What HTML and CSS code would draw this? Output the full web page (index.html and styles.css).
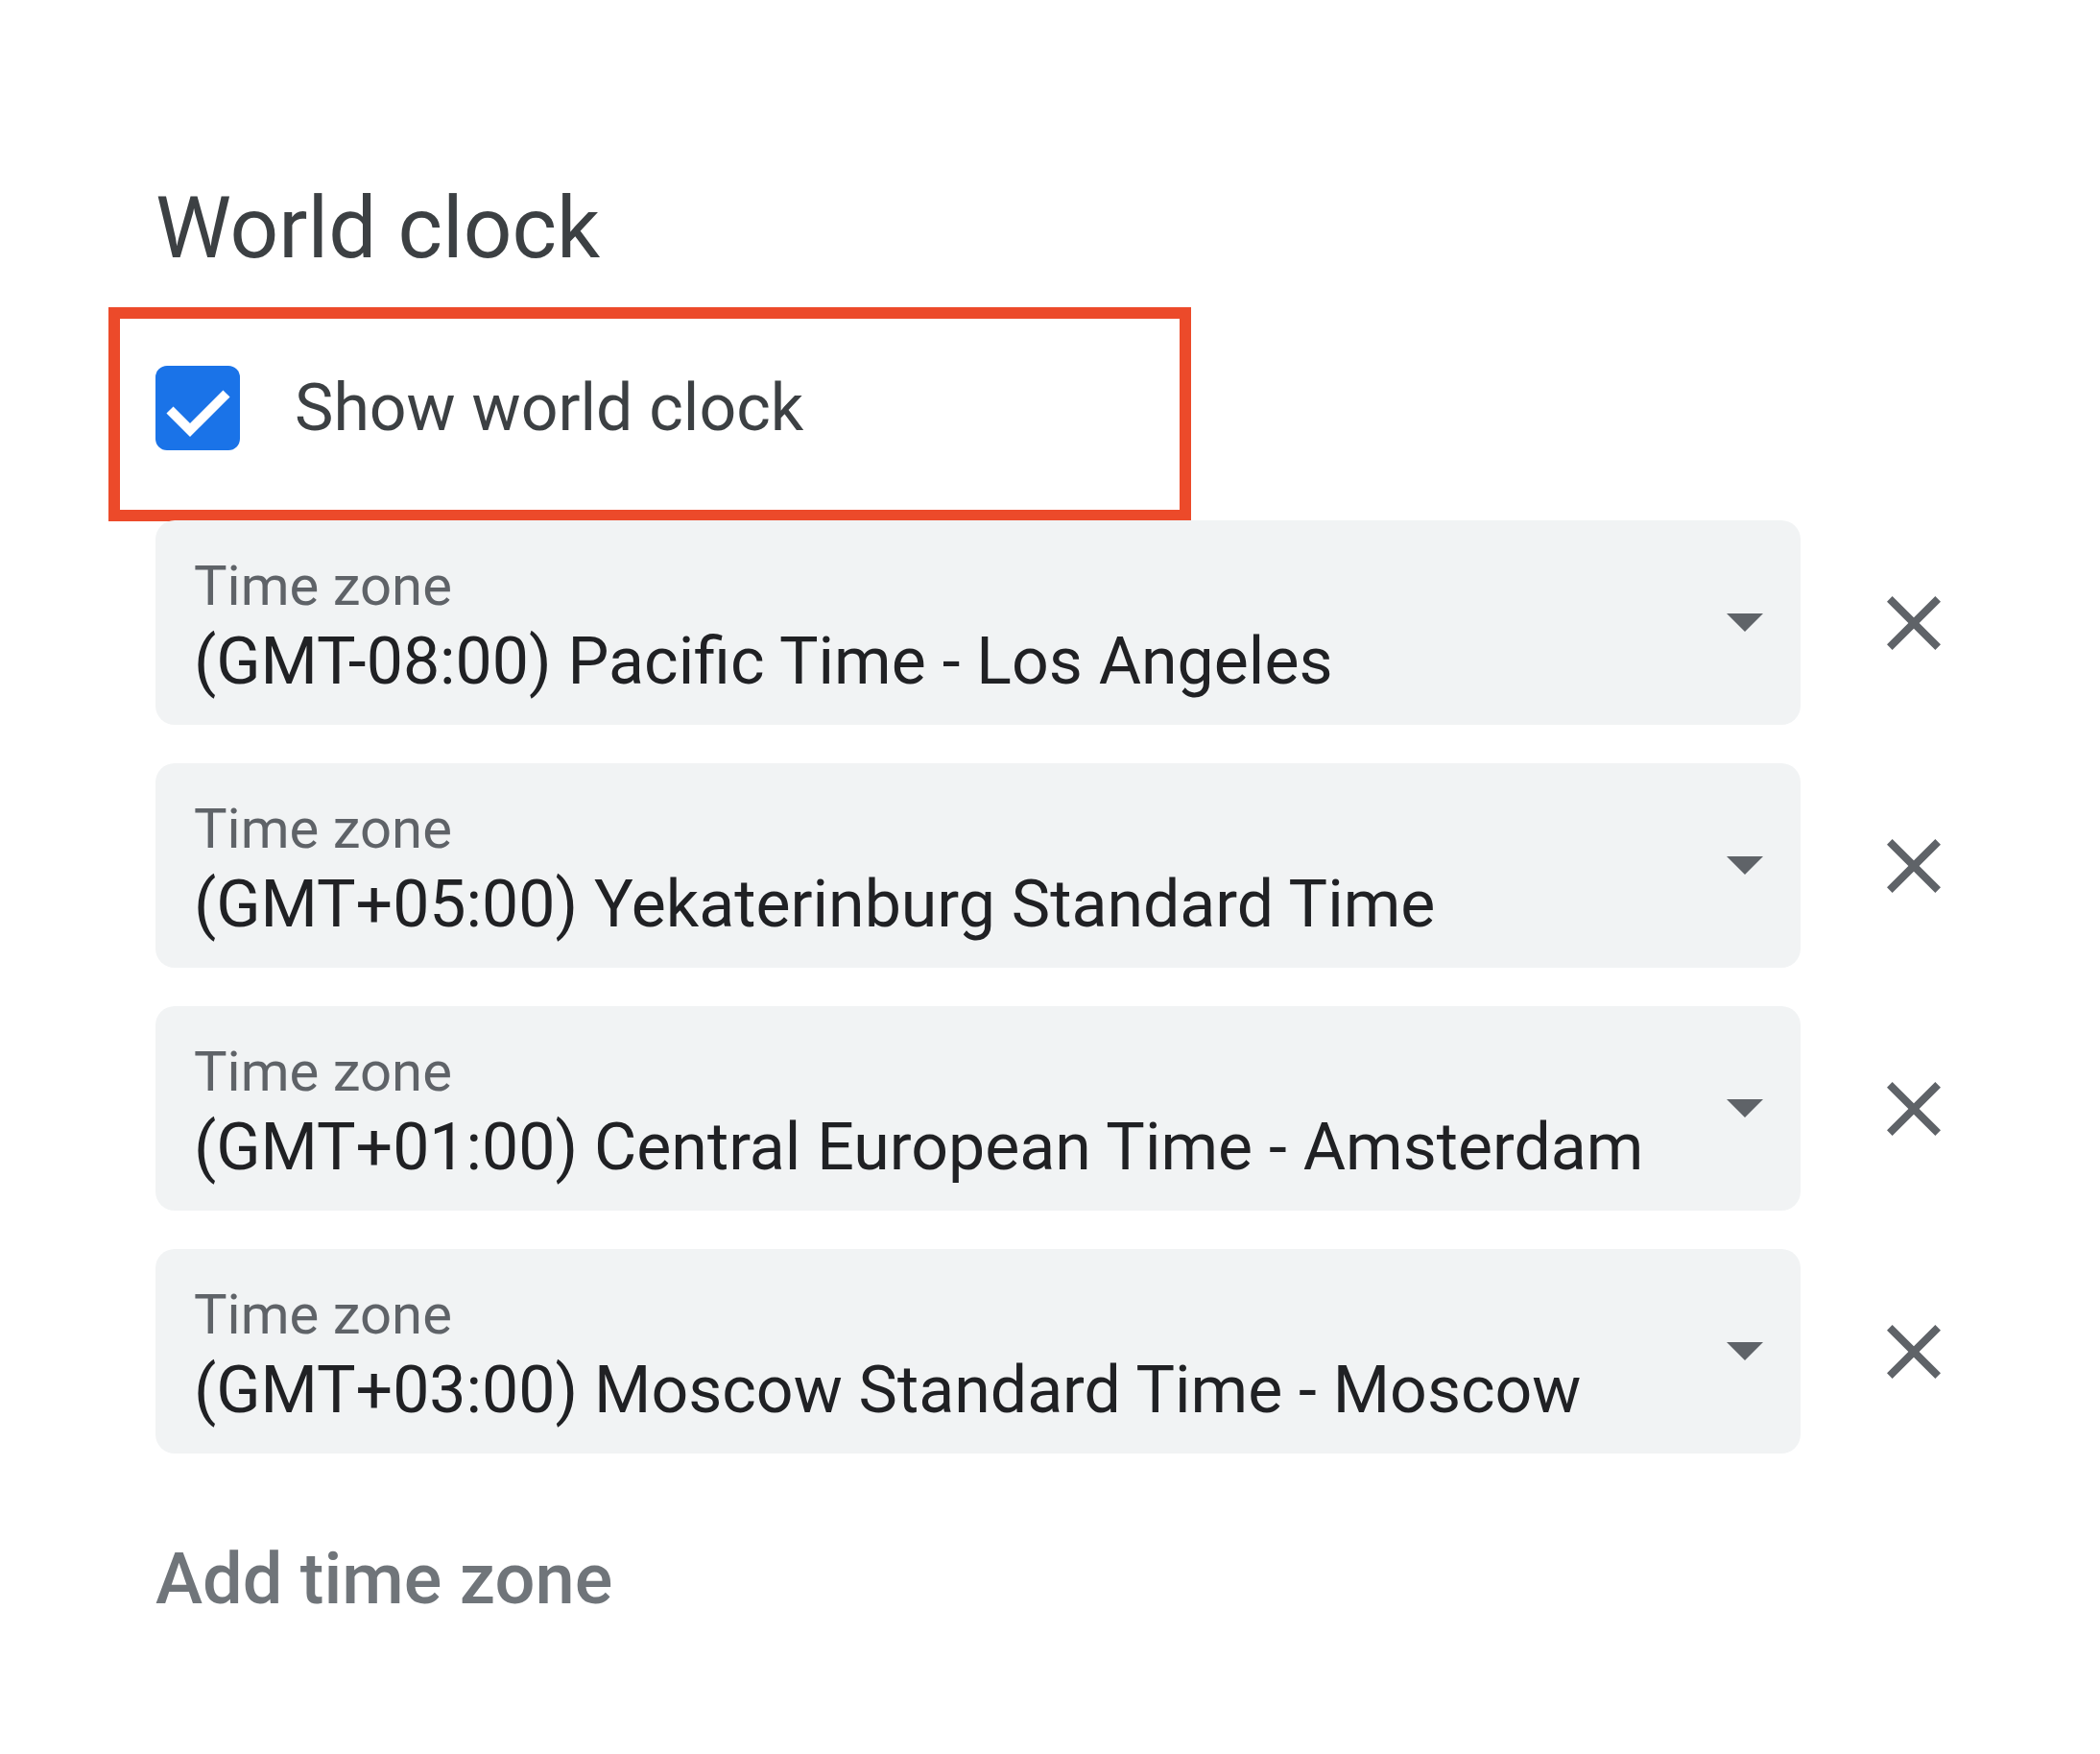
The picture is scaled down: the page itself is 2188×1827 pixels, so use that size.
FILE: index.html
```html
<!DOCTYPE html>
<html lang="en">
<head>
    <meta charset="UTF-8">
    <meta name="viewport" content="width=device-width, initial-scale=1.0">
    <title>World clock</title>
    <link rel="stylesheet" href="styles.css">
</head>
<body>
    <div class="settings">
        <h2 class="settings-title">World clock</h2>

        <!-- Show world clock (highlighted) -->
        <div class="highlight">
            <label class="checkbox-row">
                <span class="checkbox">
                    <svg viewBox="0 0 88 88" width="88" height="88">
                        <polyline points="15,46 36,67 74,29" fill="none" stroke="#fff" stroke-width="10"/>
                    </svg>
                </span>
                <span class="checkbox-label">Show world clock</span>
            </label>
        </div>

        <!-- Time zones -->
        <div class="zone-list">
            <div class="zone-row">
                <div class="zone-select">
                    <div class="zone-text">
                        <div class="zone-label">Time zone</div>
                        <div class="zone-value">(GMT-08:00) Pacific Time - Los Angeles</div>
                    </div>
                    <svg class="drop-arrow" viewBox="0 0 10 5"><path d="M0 0l5 5 5-5z"/></svg>
                </div>
                <button class="zone-remove">
                    <svg viewBox="0 0 24 24"><path d="M19 6.41L17.59 5 12 10.59 6.41 5 5 6.41 10.59 12 5 17.59 6.41 19 12 13.41 17.59 19 19 17.59 13.41 12z"/></svg>
                </button>
            </div>

            <div class="zone-row">
                <div class="zone-select">
                    <div class="zone-text">
                        <div class="zone-label">Time zone</div>
                        <div class="zone-value">(GMT+05:00) Yekaterinburg Standard Time</div>
                    </div>
                    <svg class="drop-arrow" viewBox="0 0 10 5"><path d="M0 0l5 5 5-5z"/></svg>
                </div>
                <button class="zone-remove">
                    <svg viewBox="0 0 24 24"><path d="M19 6.41L17.59 5 12 10.59 6.41 5 5 6.41 10.59 12 5 17.59 6.41 19 12 13.41 17.59 19 19 17.59 13.41 12z"/></svg>
                </button>
            </div>

            <div class="zone-row">
                <div class="zone-select">
                    <div class="zone-text">
                        <div class="zone-label">Time zone</div>
                        <div class="zone-value">(GMT+01:00) Central European Time - Amsterdam</div>
                    </div>
                    <svg class="drop-arrow" viewBox="0 0 10 5"><path d="M0 0l5 5 5-5z"/></svg>
                </div>
                <button class="zone-remove">
                    <svg viewBox="0 0 24 24"><path d="M19 6.41L17.59 5 12 10.59 6.41 5 5 6.41 10.59 12 5 17.59 6.41 19 12 13.41 17.59 19 19 17.59 13.41 12z"/></svg>
                </button>
            </div>

            <div class="zone-row">
                <div class="zone-select">
                    <div class="zone-text">
                        <div class="zone-label">Time zone</div>
                        <div class="zone-value">(GMT+03:00) Moscow Standard Time - Moscow</div>
                    </div>
                    <svg class="drop-arrow" viewBox="0 0 10 5"><path d="M0 0l5 5 5-5z"/></svg>
                </div>
                <button class="zone-remove">
                    <svg viewBox="0 0 24 24"><path d="M19 6.41L17.59 5 12 10.59 6.41 5 5 6.41 10.59 12 5 17.59 6.41 19 12 13.41 17.59 19 19 17.59 13.41 12z"/></svg>
                </button>
            </div>
        </div>

        <div class="add-zone">Add time zone</div>
    </div>
</body>
</html>
```

FILE: styles.css
```css
* {
    margin: 0;
    padding: 0;
    box-sizing: border-box;
    font-family: Roboto, "Liberation Sans", sans-serif;
}

body {
    background-color: #fff;
}

.settings {
    padding: 193px 0 0 162px;
}

.settings-title {
    font-size: 89px;
    font-weight: 400;
    line-height: 89px;
    color: #3c4043;
}

/* red annotation box round the checkbox */
.highlight {
    width: 1128px;
    height: 223px;
    margin: 38px 0 0 -49px;
    padding: 49px 0 0 37px;
    border: 12px solid #ec4a2a;
}

.checkbox-row {
    display: flex;
    align-items: center;
    gap: 57px;
    height: 88px;
}

.checkbox {
    display: block;
    width: 88px;
    height: 88px;
    border-radius: 12px;
    background: #1a73e8;
}

.checkbox svg {
    display: block;
}

.checkbox-label {
    font-size: 68px;
    line-height: 68px;
    color: #3c4043;
}

.zone-list {
    display: flex;
    flex-direction: column;
    gap: 40px;
    margin-top: -1px;
}

.zone-row {
    display: flex;
    align-items: center;
    gap: 70px;
}

.zone-select {
    display: flex;
    align-items: center;
    width: 1714px;
    height: 213px;
    padding: 0 39px 0 40px;
    background: #f1f3f4;
    border-radius: 20px;
}

.zone-text {
    flex: 1;
    padding-top: 7px;
}

.zone-label {
    font-size: 58px;
    line-height: 58px;
    color: #5f6368;
}

.zone-value {
    margin-top: 16px;
    font-size: 68px;
    line-height: 68px;
    color: #202124;
}

.drop-arrow {
    width: 38px;
    height: 19px;
    fill: #5f6368;
}

.zone-remove {
    display: flex;
    width: 96px;
    height: 96px;
    border: none;
    background: none;
}

.zone-remove svg {
    width: 96px;
    height: 96px;
    fill: #5f6368;
}

.add-zone {
    margin-top: 94px;
    font-size: 74px;
    font-weight: 500;
    line-height: 74px;
    color: #70757a;
}
```
